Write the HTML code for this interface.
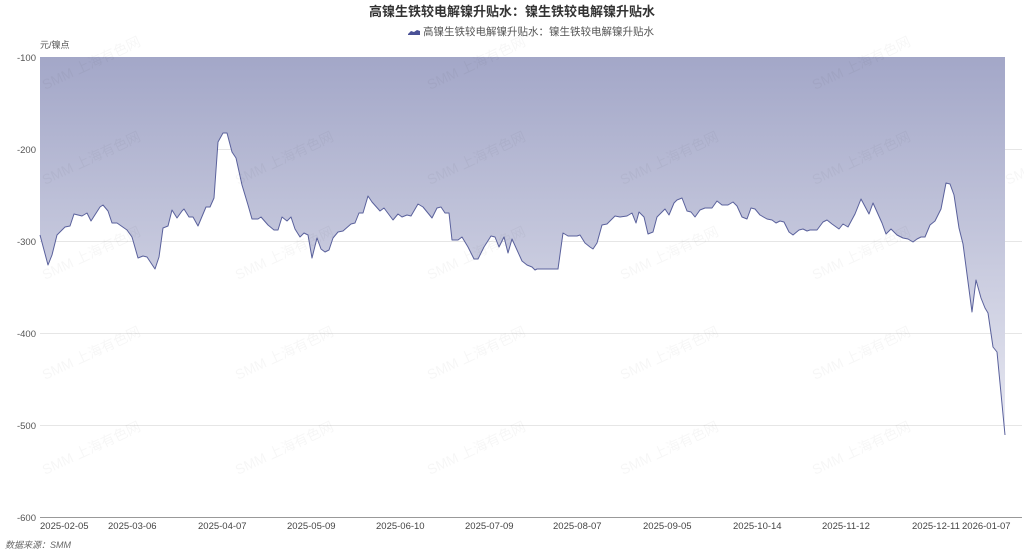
<!DOCTYPE html>
<html><head><meta charset="utf-8"><style>
html,body{margin:0;padding:0;background:#fff;}
body{width:1024px;height:553px;overflow:hidden;font-family:"Liberation Sans","Noto Sans CJK SC",sans-serif;}
</style></head><body>
<svg width="1024" height="553" viewBox="0 0 1024 553" xmlns="http://www.w3.org/2000/svg" style="font-family:'Liberation Sans','Noto Sans CJK SC',sans-serif">
<defs>
<linearGradient id="g" x1="0" y1="57" x2="0" y2="517" gradientUnits="userSpaceOnUse">
<stop offset="0" stop-color="#a3a7c8"/>
<stop offset="1" stop-color="#f6f6fa"/>
</linearGradient>
</defs>
<text x="512" y="16" text-anchor="middle" font-size="13" font-weight="bold" fill="#333">高镍生铁较电解镍升贴水：镍生铁较电解镍升贴水</text>
<path d="M408 34 L411 31 L414 32 L417 30 L420 31 L420 35 L408 35Z" fill="#4a5196"/>
<text x="423" y="35" font-size="10.5" fill="#555">高镍生铁较电解镍升贴水：镍生铁较电解镍升贴水</text>
<text x="40" y="48" font-size="9" fill="#555">元/镍点</text>
<g font-size="9.5" fill="#555" text-anchor="end">
<text x="36" y="61">-100</text><text x="36" y="153">-200</text><text x="36" y="245">-300</text><text x="36" y="337">-400</text><text x="36" y="429">-500</text><text x="36" y="521">-600</text>
</g>
<g stroke="#e6e6e6" stroke-width="1">
<line x1="40" y1="149.5" x2="1022" y2="149.5"/><line x1="40" y1="241.5" x2="1022" y2="241.5"/><line x1="40" y1="333.5" x2="1022" y2="333.5"/><line x1="40" y1="425.5" x2="1022" y2="425.5"/>
</g>
<path fill="url(#g)" d="M40 57 L40 235 L48 265 L52 255 L57 235 L65 227 L70 226 L74 214 L82 216 L87 213 L91 221 L100 207 L103 205 L108 211 L112 223 L117 223 L127 230 L132 237 L138 258 L143 256 L147 257 L155 269 L159 257 L163 228 L168 226 L172 210 L177 218 L182 211 L184 209 L189 217 L193 217 L198 226 L206 207 L210 207 L214 198 L218 142 L223 133 L227 133 L232 152 L236 158 L242 185 L248 205 L252 219 L258 219 L261 217 L268 225 L274 230 L278 230 L282 217 L287 221 L291 217 L295 229 L300 237 L304 233 L308 235 L312 258 L317 238 L321 249 L325 252 L329 250 L333 238 L338 232 L343 231 L351 224 L355 223 L359 213 L363 213 L368 196 L372 202 L380 211 L384 208 L393 220 L398 214 L402 217 L407 215 L411 216 L418 204 L423 207 L432 218 L437 208 L441 207 L445 213 L449 213 L452 240 L458 240 L462 237 L468 247 L474 259 L478 259 L484 247 L491 236 L495 237 L499 247 L504 237 L508 253 L512 239 L522 261 L527 265 L532 267 L535 270 L537 269 L558 269 L563 233 L568 236 L577 236 L580 235 L585 243 L590 247 L593 249 L597 243 L602 225 L607 224 L615 216 L620 217 L627 216 L632 213 L636 223 L639 212 L644 217 L648 234 L653 232 L657 217 L665 209 L669 215 L674 203 L677 200 L682 198 L687 211 L691 212 L695 217 L700 210 L705 208 L712 208 L717 201 L722 205 L728 205 L733 202 L737 206 L742 217 L747 219 L751 208 L755 209 L760 215 L767 219 L772 220 L776 223 L780 221 L784 222 L789 232 L793 235 L799 230 L803 229 L807 231 L810 230 L817 230 L823 222 L827 220 L832 224 L839 229 L843 224 L848 227 L855 214 L861 199 L869 214 L873 203 L882 223 L886 234 L891 229 L897 235 L903 238 L908 239 L913 242 L917 239 L921 237 L925 237 L930 225 L935 221 L941 209 L946 183 L950 184 L954 195 L959 228 L963 244 L972 312 L976 280 L981 298 L985 308 L988 313 L993 347 L997 352 L1005 435 L1005 57 Z"/>
<path fill="none" stroke="#5a619c" stroke-width="1" stroke-linejoin="round" d="M40 235 L48 265 L52 255 L57 235 L65 227 L70 226 L74 214 L82 216 L87 213 L91 221 L100 207 L103 205 L108 211 L112 223 L117 223 L127 230 L132 237 L138 258 L143 256 L147 257 L155 269 L159 257 L163 228 L168 226 L172 210 L177 218 L182 211 L184 209 L189 217 L193 217 L198 226 L206 207 L210 207 L214 198 L218 142 L223 133 L227 133 L232 152 L236 158 L242 185 L248 205 L252 219 L258 219 L261 217 L268 225 L274 230 L278 230 L282 217 L287 221 L291 217 L295 229 L300 237 L304 233 L308 235 L312 258 L317 238 L321 249 L325 252 L329 250 L333 238 L338 232 L343 231 L351 224 L355 223 L359 213 L363 213 L368 196 L372 202 L380 211 L384 208 L393 220 L398 214 L402 217 L407 215 L411 216 L418 204 L423 207 L432 218 L437 208 L441 207 L445 213 L449 213 L452 240 L458 240 L462 237 L468 247 L474 259 L478 259 L484 247 L491 236 L495 237 L499 247 L504 237 L508 253 L512 239 L522 261 L527 265 L532 267 L535 270 L537 269 L558 269 L563 233 L568 236 L577 236 L580 235 L585 243 L590 247 L593 249 L597 243 L602 225 L607 224 L615 216 L620 217 L627 216 L632 213 L636 223 L639 212 L644 217 L648 234 L653 232 L657 217 L665 209 L669 215 L674 203 L677 200 L682 198 L687 211 L691 212 L695 217 L700 210 L705 208 L712 208 L717 201 L722 205 L728 205 L733 202 L737 206 L742 217 L747 219 L751 208 L755 209 L760 215 L767 219 L772 220 L776 223 L780 221 L784 222 L789 232 L793 235 L799 230 L803 229 L807 231 L810 230 L817 230 L823 222 L827 220 L832 224 L839 229 L843 224 L848 227 L855 214 L861 199 L869 214 L873 203 L882 223 L886 234 L891 229 L897 235 L903 238 L908 239 L913 242 L917 239 L921 237 L925 237 L930 225 L935 221 L941 209 L946 183 L950 184 L954 195 L959 228 L963 244 L972 312 L976 280 L981 298 L985 308 L988 313 L993 347 L997 352 L1005 435"/>
<line x1="40" y1="517.5" x2="1022" y2="517.5" stroke="#999" stroke-width="1"/>
<g font-size="9.5" fill="#444">
<text x="40" y="529">2025-02-05</text><text x="108" y="529">2025-03-06</text><text x="198" y="529">2025-04-07</text><text x="287" y="529">2025-05-09</text><text x="376" y="529">2025-06-10</text><text x="465" y="529">2025-07-09</text><text x="553" y="529">2025-08-07</text><text x="643" y="529">2025-09-05</text><text x="733" y="529">2025-10-14</text><text x="822" y="529">2025-11-12</text><text x="912" y="529">2025-12-11</text><text x="962" y="529">2026-01-07</text>
</g>
<text x="5" y="548" font-size="9" font-style="italic" fill="#666">数据来源：SMM</text>
<g font-size="14" fill="#000" fill-opacity="0.035">
<text transform="translate(45,185) rotate(-25)">SMM 上海有色网</text>
<text transform="translate(238,185) rotate(-25)">SMM 上海有色网</text>
<text transform="translate(430,185) rotate(-25)">SMM 上海有色网</text>
<text transform="translate(623,185) rotate(-25)">SMM 上海有色网</text>
<text transform="translate(815,185) rotate(-25)">SMM 上海有色网</text>
<text transform="translate(1008,185) rotate(-25)">SMM 上海有色网</text>
<text transform="translate(45,280) rotate(-25)">SMM 上海有色网</text>
<text transform="translate(238,280) rotate(-25)">SMM 上海有色网</text>
<text transform="translate(430,280) rotate(-25)">SMM 上海有色网</text>
<text transform="translate(623,280) rotate(-25)">SMM 上海有色网</text>
<text transform="translate(815,280) rotate(-25)">SMM 上海有色网</text>
<text transform="translate(45,380) rotate(-25)">SMM 上海有色网</text>
<text transform="translate(238,380) rotate(-25)">SMM 上海有色网</text>
<text transform="translate(430,380) rotate(-25)">SMM 上海有色网</text>
<text transform="translate(623,380) rotate(-25)">SMM 上海有色网</text>
<text transform="translate(815,380) rotate(-25)">SMM 上海有色网</text>
<text transform="translate(45,475) rotate(-25)">SMM 上海有色网</text>
<text transform="translate(238,475) rotate(-25)">SMM 上海有色网</text>
<text transform="translate(430,475) rotate(-25)">SMM 上海有色网</text>
<text transform="translate(623,475) rotate(-25)">SMM 上海有色网</text>
<text transform="translate(815,475) rotate(-25)">SMM 上海有色网</text>
<text transform="translate(45,90) rotate(-25)">SMM 上海有色网</text>
<text transform="translate(430,90) rotate(-25)">SMM 上海有色网</text>
<text transform="translate(815,90) rotate(-25)">SMM 上海有色网</text>
</g>
</svg>
</body></html>
